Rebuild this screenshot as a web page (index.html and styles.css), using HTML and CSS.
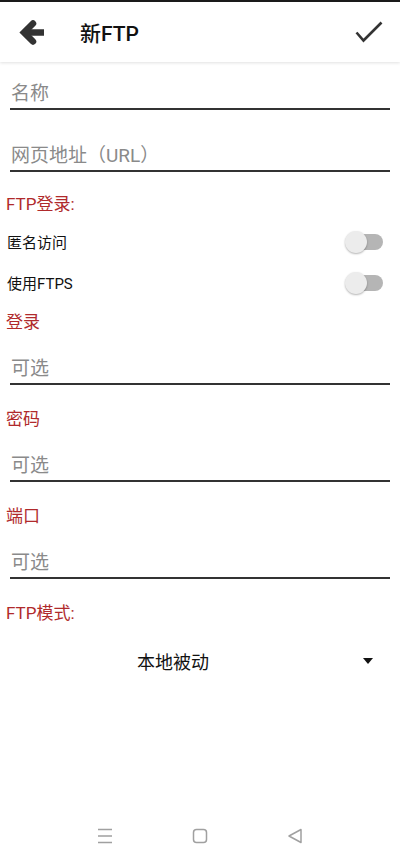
FILE: index.html
```html
<!DOCTYPE html>
<html lang="zh">
<head>
    <meta charset="UTF-8">
    <meta name="viewport" content="width=device-width, initial-scale=1.0">
    <title>新FTP</title>
    <link rel="stylesheet" href="styles.css">
</head>
<body>
    <div class="screen">
        <header class="toolbar">
            <button class="icon-btn back" aria-label="返回">
                <svg width="26" height="25" viewBox="0 0 26 25">
                    <path d="M26 12.5H7" stroke="#333" stroke-width="6.5" fill="none"/>
                    <path d="M15 3.5L6 12.5L15 21.5" stroke="#333" stroke-width="6.5" fill="none" stroke-linecap="round"/>
                </svg>
            </button>
            <h1 class="title">新FTP</h1>
            <button class="icon-btn done" aria-label="完成">
                <svg width="28" height="22" viewBox="0 0 28 22">
                    <path d="M1.5 11.5L8.5 19.5L26.5 1.5" stroke="#333" stroke-width="2.6" fill="none"/>
                </svg>
            </button>
        </header>

        <form class="form">
            <div class="field first">
                <input type="text" placeholder="名称">
            </div>
            <div class="field wide-gap">
                <input type="text" placeholder="网页地址（URL）">
            </div>

            <div class="section-label top">FTP登录:</div>

            <div class="switch-row first-row">
                <span>匿名访问</span>
                <span class="switch"></span>
            </div>
            <div class="switch-row">
                <span>使用FTPS</span>
                <span class="switch"></span>
            </div>

            <div class="section-label tight">登录</div>
            <div class="field">
                <input type="text" placeholder="可选">
            </div>

            <div class="section-label">密码</div>
            <div class="field">
                <input type="password" placeholder="可选">
            </div>

            <div class="section-label">端口</div>
            <div class="field">
                <input type="text" placeholder="可选">
            </div>

            <div class="section-label">FTP模式:</div>
            <div class="spinner">
                <span class="spinner-text">本地被动</span>
                <span class="spinner-arrow"></span>
            </div>
        </form>

        <nav class="navbar">
            <svg width="16" height="16" viewBox="0 0 16 16">
                <path d="M1 1.5H15M1 8H15M1 14.5H15" stroke="#a0a0a0" stroke-width="1.5"/>
            </svg>
            <svg width="16" height="16" viewBox="0 0 16 16">
                <rect x="1.5" y="1.5" width="13" height="13" rx="3" stroke="#a0a0a0" stroke-width="1.5" fill="none"/>
            </svg>
            <svg width="16" height="16" viewBox="0 0 16 16">
                <path d="M14 1.5V14.5L2 8Z" stroke="#a0a0a0" stroke-width="1.5" fill="none" stroke-linejoin="round"/>
            </svg>
        </nav>
    </div>
</body>
</html>
```

FILE: styles.css
```css
body {
    margin: 0;
    padding: 0;
    background-color: #fff;
    font-family: Roboto, "Noto Sans CJK SC", sans-serif;
    color: #111;
}

.screen {
    min-height: 860px;
    display: flex;
    flex-direction: column;
}

.toolbar {
    height: 62px;
    box-sizing: border-box;
    border-top: 2px solid #1a1a1a;
    display: flex;
    align-items: center;
    background-color: #fff;
    box-shadow: 0 1px 3px rgba(0, 0, 0, 0.12);
}

.icon-btn {
    background: none;
    border: none;
    padding: 0;
    display: flex;
}

.back {
    margin-left: 18px;
    margin-top: 1px;
}

.title {
    margin: 0 0 0 36px;
    font-size: 21px;
    font-weight: 500;
    flex: 1;
}

.done {
    margin-right: 17px;
}

.form {
    display: flex;
    flex-direction: column;
}

.field {
    margin: 24px 10px 0;
    padding-bottom: 2px;
    border-bottom: 2px solid #333;
}

.field.first {
    margin-top: 20px;
}

.field.wide-gap {
    margin-top: 34px;
}

.field input {
    display: block;
    width: 100%;
    box-sizing: border-box;
    border: none;
    outline: none;
    padding: 0 0 0 1px;
    font-family: Roboto, "Noto Sans CJK SC", sans-serif;
    font-size: 19px;
    line-height: 24px;
    height: 24px;
    color: #222;
    background: none;
}

.field input::placeholder {
    color: #8a8a8a;
}

.section-label {
    margin: 23px 0 0 6px;
    font-size: 17px;
    line-height: 22px;
    color: #b02a2c;
}

.section-label.top {
    margin-top: 21px;
}

.section-label.tight {
    margin-top: 8px;
}

.switch-row {
    height: 41px;
    display: flex;
    align-items: center;
    justify-content: space-between;
    padding: 0 17px 0 7px;
    font-size: 15px;
}

.switch-row.first-row {
    margin-top: 6px;
}

.switch {
    position: relative;
    width: 38px;
    height: 22px;
}

.switch::before {
    content: "";
    position: absolute;
    left: 4px;
    right: 0;
    top: 3px;
    height: 16px;
    border-radius: 8px;
    background-color: #b5b5b5;
}

.switch::after {
    content: "";
    position: absolute;
    left: 0;
    top: 0;
    width: 22px;
    height: 22px;
    border-radius: 50%;
    background-color: #ececec;
    box-shadow: 0 1px 2px rgba(0, 0, 0, 0.3);
}

.spinner {
    margin-top: 13px;
    height: 48px;
    display: flex;
    align-items: center;
}

.spinner-text {
    width: 346px;
    text-align: center;
    font-size: 18px;
}

.spinner-arrow {
    margin-left: 17px;
    width: 0;
    height: 0;
    border-left: 5px solid transparent;
    border-right: 5px solid transparent;
    border-top: 6px solid #111;
}

.navbar {
    margin-top: auto;
    height: 48px;
    display: flex;
    align-items: center;
    justify-content: center;
    gap: 79px;
}
```
